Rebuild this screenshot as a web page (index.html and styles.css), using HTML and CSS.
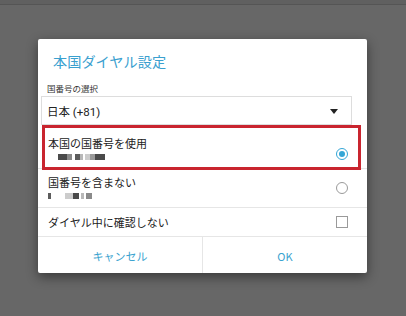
FILE: index.html
```html
<!DOCTYPE html>
<html lang="ja">
<head>
<meta charset="utf-8">
<link rel="stylesheet" href="styles.css">
</head>
<body>
<div class="topbar"></div>
<div class="stage">
  <div class="dialog">
    <h1 class="title">本国ダイヤル設定</h1>
    <div class="label">国番号の選択</div>
    <div class="select">
      <span class="select-text">日本 (+81)</span>
      <svg class="arrow" width="8" height="5" viewBox="0 0 8 5"><path d="M0 0H8L4 5Z" fill="#222"/></svg>
    </div>
    <div class="row row-1">
      <div class="texts">
        <div class="main">本国の国番号を使用</div>
        <div class="pix pix-1">
          <i class="p d1 w9"></i><i class="p m1 w5"></i><i class="gap w3"></i><i class="p d2 w5"></i><i class="p l1 w3"></i><i class="gap w2"></i><i class="p l2 w5"></i><i class="p m2 w5"></i><i class="p d1 w10"></i>
        </div>
      </div>
      <span class="radio on"></span>
    </div>
    <div class="row row-2">
      <div class="texts">
        <div class="main">国番号を含まない</div>
        <div class="pix pix-2">
          <i class="p d2 w3"></i><i class="gap w14"></i><i class="p l2 w8"></i><i class="p d1 w6"></i><i class="gap w2"></i><i class="p l1 w3"></i><i class="gap w2"></i><i class="p m1 w6"></i>
        </div>
      </div>
      <span class="radio"></span>
    </div>
    <div class="row row-3">
      <div class="main">ダイヤル中に確認しない</div>
      <span class="check"></span>
    </div>
    <div class="buttons">
      <div class="btn">キャンセル</div>
      <div class="btn">OK</div>
    </div>
    <div class="highlight"></div>
  </div>
</div>
</body>
</html>
```
FILE: styles.css
```css
* { box-sizing: border-box; }
html, body { margin: 0; padding: 0; }
body {
  width: 406px;
  height: 316px;
  background: #676767;
  font-family: "Noto Sans CJK JP", "Noto Sans", sans-serif;
  color: #222;
  overflow: hidden;
}
.topbar {
  height: 5px;
  background: #606060;
  border-bottom: 1px solid #555;
}
.stage {
  padding-top: 34px;
  padding-left: 38px;
}
.dialog {
  position: relative;
  width: 329px;
  background: #fff;
  border-radius: 2px;
  box-shadow: 0 4px 12px rgba(0, 0, 0, 0.45);
}
.title {
  margin: 0;
  padding: 12px 0 0 15px;
  height: 32px;
  font-size: 14.2px;
  line-height: 20px;
  font-weight: normal;
  color: #3aa0cf;
}
.label {
  padding: 10px 0 0 9px;
  height: 25px;
  font-size: 8.5px;
  line-height: 14px;
  color: #333;
}
.select {
  display: flex;
  align-items: center;
  justify-content: space-between;
  margin: 0 15px 0 3px;
  height: 29px;
  border: 1px solid #ddd;
  padding: 0 13px 0 5px;
}
.select-text {
  font-family: Roboto, "Noto Sans CJK JP", sans-serif;
  font-size: 11.5px;
  color: #222;
}
.arrow { display: block; margin-top: 1px; }
.row {
  display: flex;
  justify-content: space-between;
  padding: 0 19px 0 10px;
  border-bottom: 1px solid #e6e6e6;
}
.main {
  font-size: 11px;
  line-height: 16px;
  color: #222;
}
.row-1 { height: 44px; padding-top: 10px; align-items: flex-start; }
.row-1 .radio { margin-top: 13px; }
.row-2 { height: 39px; padding-top: 5px; align-items: flex-start; }
.row-2 .radio { margin-top: 8px; }
.row-3 { height: 29px; align-items: center; }
.pix {
  display: flex;
  height: 6px;
  margin-top: 3px;
}
.pix-1 { padding-left: 10px; }
.pix-2 { padding-left: 0; }
.p, .gap { display: block; height: 6px; }
.d1 { background: #4a4a4a; }
.d2 { background: #5c5c5c; }
.m1 { background: #8a8a8a; }
.m2 { background: #9a9a9a; }
.l1 { background: #b8b8b8; }
.l2 { background: #cccccc; }
.w2 { width: 2px; } .w3 { width: 3px; } .w5 { width: 5px; } .w6 { width: 6px; }
.w8 { width: 8px; } .w9 { width: 9px; } .w10 { width: 10px; } .w14 { width: 14px; }
.radio {
  display: block;
  width: 12px;
  height: 12px;
  border-radius: 50%;
  border: 1px solid #9a9a9a;
  position: relative;
  flex: none;
}
.radio.on {
  border: 1.5px solid #34a6d6;
}
.radio.on::after {
  content: "";
  position: absolute;
  left: 1.5px;
  top: 1.5px;
  width: 6px;
  height: 6px;
  border-radius: 50%;
  background: #34a6d6;
}
.check {
  display: block;
  width: 12px;
  height: 12px;
  border: 1px solid #9a9a9a;
  flex: none;
}
.buttons {
  display: flex;
  height: 36px;
}
.btn {
  flex: 1;
  display: flex;
  align-items: center;
  justify-content: center;
  font-size: 11px;
  color: #3aa3cf;
  padding-top: 1px;
}
.btn:first-child { border-right: 1px solid #e6e6e6; }
.highlight {
  position: absolute;
  left: 4px;
  top: 86px;
  width: 319px;
  height: 45px;
  border: 3px solid #c9252f;
  pointer-events: none;
}
```
